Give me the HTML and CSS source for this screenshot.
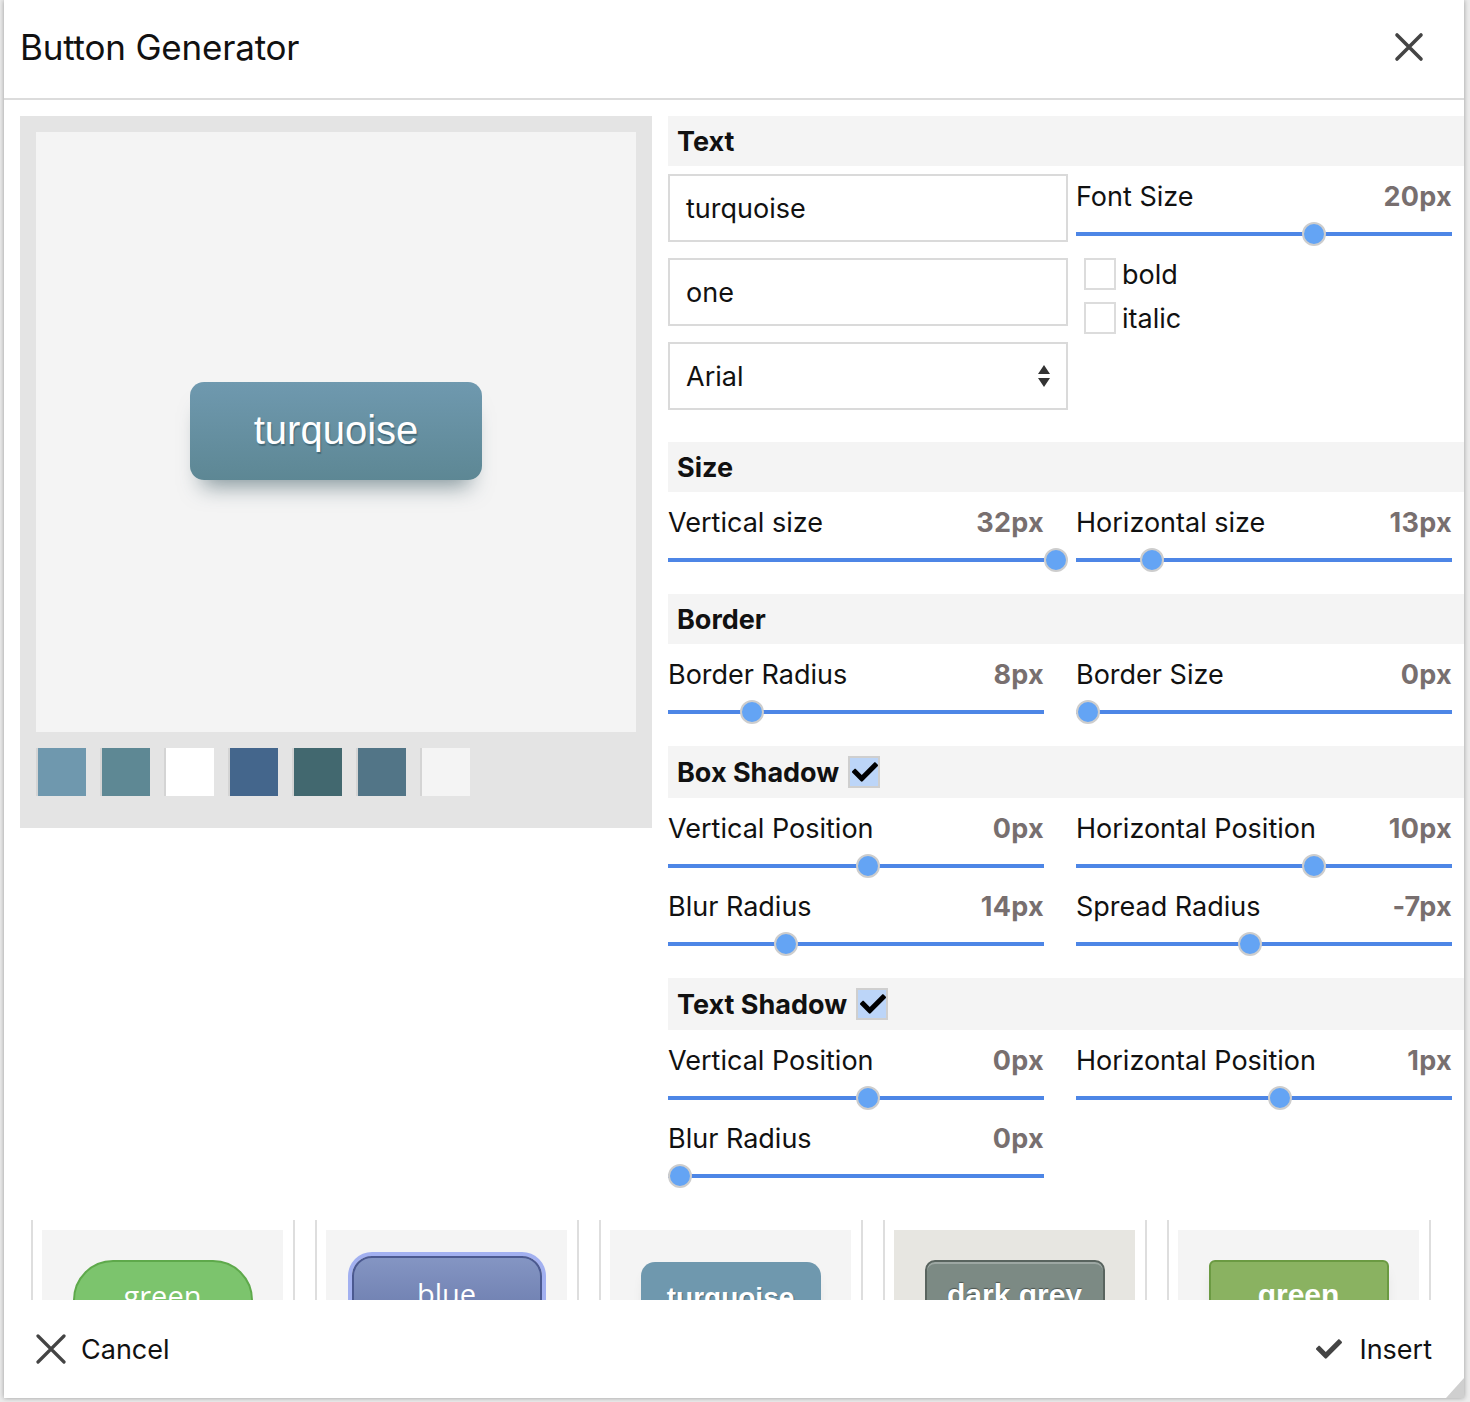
FILE: index.html
```html
<!DOCTYPE html>
<html>
<head>
<meta charset="utf-8">
<title>Button Generator</title>
<link rel="stylesheet" href="styles.css">
</head>
<body>
<div class="dialog">
  <header class="dlg-head">
    <h1 class="title">Button Generator</h1>
    <span class="close"><svg width="30" height="30" viewBox="0 0 30 30"><path d="M3 3L27 27M27 3L3 27" stroke="#444" stroke-width="3.6" stroke-linecap="round"/></svg></span>
  </header>

  <div class="dlg-body">
    <div class="preview-panel">
      <div class="stage"><div class="demo-btn">turquoise</div></div>
      <div class="swatches">
        <span class="sw sw1"></span><span class="sw sw2"></span><span class="sw sw3"></span><span class="sw sw4"></span><span class="sw sw5"></span><span class="sw sw6"></span><span class="sw sw7"></span>
      </div>
    </div>

    <div class="settings">
      <section class="sec sec-text">
        <div class="sec-head">Text</div>
        <div class="text-grid">
          <div class="inputs">
            <div class="field">turquoise</div>
            <div class="field">one</div>
            <div class="field select">Arial
              <svg class="sel-arrows" width="14" height="24" viewBox="0 0 14 24"><path d="M7 1L13 10H1Z M7 23L13 14H1Z" fill="#333"/></svg>
            </div>
          </div>
          <div class="text-side">
            <div class="ctrl">
              <div class="ctrl-label"><span>Font Size</span><b class="val">20px</b></div>
              <div class="track"><span class="thumb" style="left:238px"></span></div>
            </div>
            <div class="check"><span class="box"></span>bold</div>
            <div class="check"><span class="box"></span>italic</div>
          </div>
        </div>
      </section>

      <section class="sec">
        <div class="sec-head">Size</div>
        <div class="sec-body">
          <div class="ctrl">
            <div class="ctrl-label"><span>Vertical size</span><b class="val">32px</b></div>
            <div class="track"><span class="thumb" style="left:388px"></span></div>
          </div>
          <div class="ctrl">
            <div class="ctrl-label"><span>Horizontal size</span><b class="val">13px</b></div>
            <div class="track"><span class="thumb" style="left:76px"></span></div>
          </div>
        </div>
      </section>

      <section class="sec">
        <div class="sec-head">Border</div>
        <div class="sec-body">
          <div class="ctrl">
            <div class="ctrl-label"><span>Border Radius</span><b class="val">8px</b></div>
            <div class="track"><span class="thumb" style="left:84px"></span></div>
          </div>
          <div class="ctrl">
            <div class="ctrl-label"><span>Border Size</span><b class="val">0px</b></div>
            <div class="track"><span class="thumb" style="left:12px"></span></div>
          </div>
        </div>
      </section>

      <section class="sec">
        <div class="sec-head tall">Box Shadow
          <span class="hbox"><svg width="32" height="26" viewBox="0 0 512 512"><path d="M173.898 439.404l-166.4-166.4c-9.997-9.997-9.997-26.206 0-36.204l36.203-36.204c9.997-9.998 26.207-9.998 36.204 0L192 312.69 432.095 72.596c9.997-9.997 26.207-9.997 36.204 0l36.203 36.204c9.997 9.997 9.997 26.206 0 36.204l-294.4 294.401c-9.998 9.997-26.207 9.997-36.204-.001z" fill="#000"/></svg></span>
        </div>
        <div class="sec-body">
          <div class="ctrl">
            <div class="ctrl-label"><span>Vertical Position</span><b class="val">0px</b></div>
            <div class="track"><span class="thumb" style="left:200px"></span></div>
          </div>
          <div class="ctrl">
            <div class="ctrl-label"><span>Horizontal Position</span><b class="val">10px</b></div>
            <div class="track"><span class="thumb" style="left:238px"></span></div>
          </div>
          <div class="ctrl">
            <div class="ctrl-label"><span>Blur Radius</span><b class="val">14px</b></div>
            <div class="track"><span class="thumb" style="left:118px"></span></div>
          </div>
          <div class="ctrl">
            <div class="ctrl-label"><span>Spread Radius</span><b class="val">-7px</b></div>
            <div class="track"><span class="thumb" style="left:174px"></span></div>
          </div>
        </div>
      </section>

      <section class="sec">
        <div class="sec-head tall">Text Shadow
          <span class="hbox"><svg width="32" height="26" viewBox="0 0 512 512"><path d="M173.898 439.404l-166.4-166.4c-9.997-9.997-9.997-26.206 0-36.204l36.203-36.204c9.997-9.998 26.207-9.998 36.204 0L192 312.69 432.095 72.596c9.997-9.997 26.207-9.997 36.204 0l36.203 36.204c9.997 9.997 9.997 26.206 0 36.204l-294.4 294.401c-9.998 9.997-26.207 9.997-36.204-.001z" fill="#000"/></svg></span>
        </div>
        <div class="sec-body">
          <div class="ctrl">
            <div class="ctrl-label"><span>Vertical Position</span><b class="val">0px</b></div>
            <div class="track"><span class="thumb" style="left:200px"></span></div>
          </div>
          <div class="ctrl">
            <div class="ctrl-label"><span>Horizontal Position</span><b class="val">1px</b></div>
            <div class="track"><span class="thumb" style="left:204px"></span></div>
          </div>
          <div class="ctrl">
            <div class="ctrl-label"><span>Blur Radius</span><b class="val">0px</b></div>
            <div class="track"><span class="thumb" style="left:12px"></span></div>
          </div>
        </div>
      </section>
    </div>
  </div>

  <div class="presets">
    <div class="card"><div class="card-in"><div class="pb pb-green">green</div></div></div>
    <div class="card"><div class="card-in"><div class="pb pb-blue">blue</div></div></div>
    <div class="card"><div class="card-in"><div class="pb pb-turq">turquoise</div></div></div>
    <div class="card"><div class="card-in card-dark"><div class="pb pb-dark">dark grey</div></div></div>
    <div class="card"><div class="card-in"><div class="pb pb-green2">green</div></div></div>
  </div>

  <footer class="dlg-foot">
    <span class="fbtn"><svg width="30" height="30" viewBox="0 0 30 30"><path d="M2 2L28 28M28 2L2 28" stroke="#444" stroke-width="3.2" stroke-linecap="round"/></svg>Cancel</span>
    <span class="fbtn"><svg width="30" height="26" viewBox="0 0 512 512"><path d="M173.898 439.404l-166.4-166.4c-9.997-9.997-9.997-26.206 0-36.204l36.203-36.204c9.997-9.998 26.207-9.998 36.204 0L192 312.69 432.095 72.596c9.997-9.997 26.207-9.997 36.204 0l36.203 36.204c9.997 9.997 9.997 26.206 0 36.204l-294.4 294.401c-9.998 9.997-26.207 9.997-36.204-.001z" fill="#444"/></svg>Insert</span>
  </footer>
  <span class="grip"></span>
</div>
</body>
</html>
```

FILE: styles.css
```css
* { box-sizing: border-box; }
html, body { margin: 0; padding: 0; }
body {
  background: #ececec;
  font-family: Inter, "Noto Sans", "Liberation Sans", sans-serif;
  color: #111;
  width: 1470px;
  height: 1402px;
  overflow: hidden;
}
.dialog {
  position: relative;
  margin-left: 4px;
  width: 1460px;
  height: 1398px;
  background: #fff;
  box-shadow: 0 0 5px rgba(0,0,0,0.35);
  display: flex;
  flex-direction: column;
  overflow: hidden;
}

/* header */
.dlg-head {
  height: 100px;
  flex: none;
  border-bottom: 2px solid #dcdcdc;
  display: flex;
  align-items: center;
  justify-content: space-between;
  padding: 0 40px 4px 16px;
}
.title {
  margin: 0;
  font-size: 35px;
  font-weight: 400;
  letter-spacing: -0.2px;
  color: #111;
}
.close { display: flex; }

/* body */
.dlg-body {
  display: grid;
  grid-template-columns: 632px 796px;
  column-gap: 16px;
  padding: 16px 0 0 16px;
  align-items: start;
}
.preview-panel {
  background: #e4e4e4;
  padding: 16px;
  height: 712px;
}
.stage {
  width: 600px;
  height: 600px;
  background: #f4f4f4;
  display: flex;
  align-items: center;
  justify-content: center;
}
.demo-btn {
  width: 292px;
  height: 98px;
  border-radius: 14px;
  background: linear-gradient(#6f99af, #5d8794);
  color: #fff;
  font-family: "Liberation Sans", Arial, sans-serif;
  font-size: 40px;
  display: flex;
  align-items: center;
  justify-content: center;
  padding-bottom: 2px;
  margin-top: -2px;
  text-shadow: 1px 2px 1px rgba(30,60,70,0.45);
  box-shadow: 0 18px 22px -12px rgba(55,85,95,0.6);
}
.swatches {
  display: flex;
  gap: 14px;
  margin-top: 16px;
}
.sw {
  width: 50px;
  height: 48px;
  border-left: 2px solid #d4d4d4;
}
.sw1 { background: #6f98ae; }
.sw2 { background: #5e8894; }
.sw3 { background: #ffffff; }
.sw4 { background: #44668c; }
.sw5 { background: #42686f; }
.sw6 { background: #527587; }
.sw7 { background: #f4f4f4; }

/* settings */
.settings { width: 796px; }
.sec-head {
  background: #f4f4f4;
  min-height: 50px;
  display: flex;
  align-items: center;
  gap: 9px;
  padding: 0 9px;
  font-size: 27px;
  font-weight: 700;
  color: #111;
}
.sec-head.tall { min-height: 52px; }
.hbox {
  width: 32px;
  height: 32px;
  background: #bcd5f8;
  border: 2px solid #cfcfcf;
  display: flex;
  align-items: center;
  justify-content: center;
}
.hbox svg { flex: none; margin-left: 2px; }
.sec-text { padding-bottom: 32px; }
.text-grid {
  display: grid;
  grid-template-columns: 400px 376px;
  column-gap: 8px;
}
.inputs {
  padding-top: 8px;
  display: flex;
  flex-direction: column;
  gap: 16px;
}
.field {
  height: 68px;
  border: 2px solid #dadada;
  background: #fff;
  display: flex;
  align-items: center;
  justify-content: space-between;
  padding: 0 15px 0 16px;
  font-size: 27px;
  color: #111;
}
.sel-arrows { flex: none; }
.check {
  display: flex;
  align-items: center;
  gap: 6px;
  padding-left: 8px;
  font-size: 27px;
  color: #111;
  height: 32px;
  margin-top: 12px;
}
.ctrl + .check { margin-top: 14px; }
.box {
  width: 32px;
  height: 32px;
  border: 2px solid #dcdcdc;
  background: #fff;
}

.sec-body {
  display: grid;
  grid-template-columns: 376px 376px;
  column-gap: 32px;
  padding-bottom: 24px;
}
.ctrl { padding-top: 12px; }
.ctrl-label {
  height: 36px;
  display: flex;
  align-items: center;
  justify-content: space-between;
  font-size: 27px;
  color: #111;
}
.val {
  font-weight: 700;
  color: #786f6f;
  letter-spacing: 0.3px;
}
.track {
  position: relative;
  height: 20px;
  margin-top: 10px;
  display: flex;
  align-items: center;
}
.track::before {
  content: "";
  display: block;
  width: 100%;
  height: 4px;
  background: #4d86e6;
}
.thumb {
  position: absolute;
  top: 50%;
  width: 24px;
  height: 24px;
  margin: -12px 0 0 -12px;
  border-radius: 50%;
  background: #64a4f4;
  border: 2px solid #cdcdcd;
}

/* presets */
.presets {
  margin-top: 10px;
  height: 80px;
  flex: none;
  overflow: hidden;
  display: flex;
  gap: 20px;
  padding-left: 27px;
}
.card {
  width: 264px;
  flex: none;
  border-left: 2px solid #dedede;
  border-right: 2px solid #dedede;
  padding: 10px 10px 0 9px;
}
.card-in {
  width: 241px;
  height: 200px;
  background: #f4f4f4;
  padding-top: 30px;
  display: flex;
  justify-content: center;
}
.card-dark { background: #e7e6e1; }
.pb {
  width: 180px;
  height: 80px;
  color: #fff;
  display: flex;
  justify-content: center;
  padding-top: 18px;
  font-size: 29px;
}
.pb-green {
  background: #7cc46d;
  border: 2px solid #5ea94b;
  border-radius: 40px;
  font-family: "Open Sans", sans-serif;
  padding-top: 14px;
}
.pb-blue {
  width: 190px;
  margin-top: -4px;
  background: linear-gradient(#8495c3, #6676a8);
  border: 2px solid #4b5990;
  box-shadow: 0 0 0 4px #a2b0f0;
  border-radius: 20px;
  font-family: "Open Sans", sans-serif;
  padding-top: 16px;
}
.pb-turq {
  margin-top: 2px;
  background: #6f98ae;
  border-radius: 14px;
  font-family: "Liberation Sans", sans-serif;
  font-weight: 700;
  font-size: 28px;
  padding-top: 20px;
  text-shadow: 1px 1px 1px rgba(0,0,0,0.3);
  box-shadow: 0 8px 14px -6px rgba(0,0,0,0.15);
}
.pb-dark {
  background: #7c8a84;
  border: 2px solid #59645f;
  border-radius: 10px;
  box-shadow: inset 0 2px 0 rgba(255,255,255,0.25);
  font-family: "Liberation Sans", sans-serif;
  font-weight: 700;
  font-size: 30px;
  padding-top: 16px;
  text-shadow: 0 -1px 1px rgba(0,0,0,0.4);
}
.pb-green2 {
  background: #8ab261;
  border: 2px solid #6b9a42;
  border-radius: 6px;
  font-family: "Liberation Sans", sans-serif;
  font-weight: 700;
  font-size: 30px;
  padding-top: 16px;
  box-shadow: 0 8px 14px -6px rgba(0,0,0,0.15);
}

/* footer */
.dlg-foot {
  flex: 1;
  display: flex;
  align-items: center;
  justify-content: space-between;
  padding: 0 32px 0 32px;
}
.fbtn {
  display: flex;
  align-items: center;
  gap: 15px;
  font-size: 27px;
  color: #111;
}
.grip {
  position: absolute;
  right: 0;
  bottom: 0;
  width: 0;
  height: 0;
  border-left: 18px solid transparent;
  border-bottom: 20px solid #cfcfcf;
}
```
